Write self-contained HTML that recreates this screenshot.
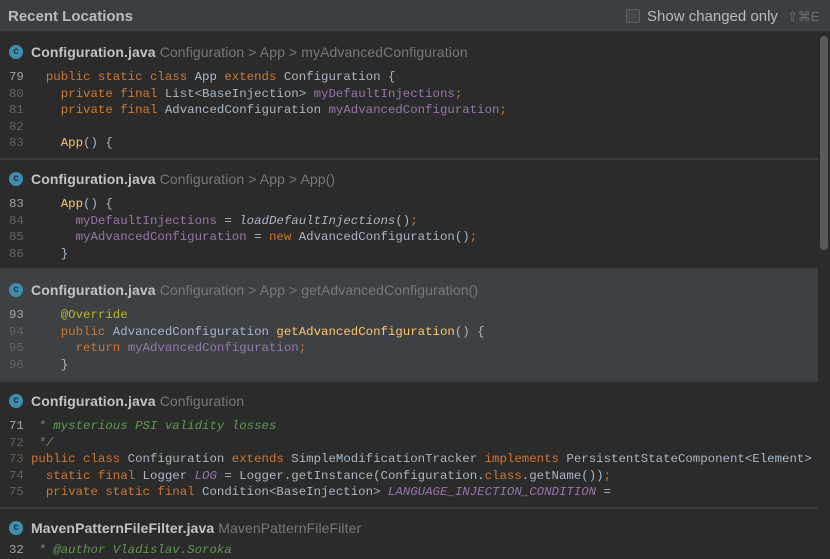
<!DOCTYPE html>
<html><head><meta charset="utf-8"><style>
*{margin:0;padding:0;box-sizing:border-box}
body{width:830px;height:554px;overflow:hidden;background:#2b2b2b;font-family:"Liberation Sans",sans-serif;position:relative}
.top{position:absolute;left:0;top:0;width:830px;height:32px;background:#3c3f41;border-bottom:1px solid #323232}
.title{position:absolute;left:8px;top:8px;font-size:15px;font-weight:bold;color:#bbbbbb}
.cb{position:absolute;left:626px;top:9px;width:14px;height:14px;border:1px solid #5e6060;border-radius:2px;background:#43494a}
.show{position:absolute;left:647px;top:8px;font-size:15px;color:#bbbbbb}
.sc{position:absolute;left:787px;top:9px;font-size:13px;color:#6e6e6e}
.sep{position:absolute;left:0;width:818px;height:2px;background:#3a3d3f}
.sel{position:absolute;left:0;top:270px;width:818px;height:110px;background:#3e4144}
.hd{position:absolute;left:9px;font-size:14px;color:#787878;white-space:nowrap;line-height:16px;letter-spacing:0.1px}
.hd b{color:#c3c3c3;margin-left:22px;margin-right:4px}
.ic{position:absolute;left:0;top:1px;width:14px;height:14px;border-radius:50%;background:#3f8eaf;color:#1f3640;font-size:10px;font-weight:bold;text-align:center;line-height:14px;letter-spacing:0}
.code{position:absolute;left:0;width:818px;overflow:hidden;font-family:"Liberation Mono",monospace;font-size:12.4px;line-height:16.6px;white-space:pre;color:#a9b7c6}
.ln{display:inline-block;width:31px;padding-left:9px;color:#606366}
.cl{color:#a4a3a3}
.k{color:#cc7832}.f{color:#9876aa}.m{color:#ffc66d}.c{color:#629755;font-style:italic}.a{color:#bbb529}.i{font-style:italic}
.sb{position:absolute;left:820px;top:36px;width:8px;height:214px;border-radius:4px;background:#595b5d}
</style></head><body>
<div class="top"><div class="title">Recent Locations</div><div class="cb"></div><div class="show">Show changed only</div><div class="sc">⇧⌘E</div></div>
<div class="sel"></div>
<div class="sep" style="top:158px"></div>
<div class="sep" style="top:268px"></div>
<div class="sep" style="top:380px"></div>
<div class="sep" style="top:507px"></div>

<div class="hd" style="top:44px"><span class="ic">c</span><b>Configuration.java</b>Configuration &gt; App &gt; myAdvancedConfiguration</div>
<div class="code" style="top:69px"><span class="ln cl">79</span>  <span class="k">public static class</span> App <span class="k">extends</span> Configuration {
<span class="ln">80</span>    <span class="k">private final</span> List&lt;BaseInjection&gt; <span class="f">myDefaultInjections</span><span class="k">;</span>
<span class="ln">81</span>    <span class="k">private final</span> AdvancedConfiguration <span class="f">myAdvancedConfiguration</span><span class="k">;</span>
<span class="ln">82</span>
<span class="ln">83</span>    <span class="m">App</span>() {</div>

<div class="hd" style="top:171px"><span class="ic">c</span><b>Configuration.java</b>Configuration &gt; App &gt; App()</div>
<div class="code" style="top:196px"><span class="ln cl">83</span>    <span class="m">App</span>() {
<span class="ln">84</span>      <span class="f">myDefaultInjections</span> = <span class="i">loadDefaultInjections</span>()<span class="k">;</span>
<span class="ln">85</span>      <span class="f">myAdvancedConfiguration</span> = <span class="k">new</span> AdvancedConfiguration()<span class="k">;</span>
<span class="ln">86</span>    }</div>

<div class="hd" style="top:282px"><span class="ic">c</span><b>Configuration.java</b>Configuration &gt; App &gt; getAdvancedConfiguration()</div>
<div class="code" style="top:307px"><span class="ln cl">93</span>    <span class="a">@Override</span>
<span class="ln">94</span>    <span class="k">public</span> AdvancedConfiguration <span class="m">getAdvancedConfiguration</span>() {
<span class="ln">95</span>      <span class="k">return</span> <span class="f">myAdvancedConfiguration</span><span class="k">;</span>
<span class="ln">96</span>    }</div>

<div class="hd" style="top:393px"><span class="ic">c</span><b>Configuration.java</b>Configuration</div>
<div class="code" style="top:418px"><span class="ln cl">71</span> <span class="c">* mysterious PSI validity losses</span>
<span class="ln">72</span> <span class="c">*/</span>
<span class="ln">73</span><span class="k">public class</span> Configuration <span class="k">extends</span> SimpleModificationTracker <span class="k">implements</span> PersistentStateComponent&lt;Element&gt;
<span class="ln">74</span>  <span class="k">static final</span> Logger <span class="f i">LOG</span> = Logger.getInstance(Configuration.<span class="k">class</span>.getName())<span class="k">;</span>
<span class="ln">75</span>  <span class="k">private static final</span> Condition&lt;BaseInjection&gt; <span class="f i">LANGUAGE_INJECTION_CONDITION</span> =</div>

<div class="hd" style="top:520px"><span class="ic">c</span><b>MavenPatternFileFilter.java</b>MavenPatternFileFilter</div>
<div class="code" style="top:542px"><span class="ln cl">32</span> <span class="c">* @author Vladislav.Soroka</span></div>

<div class="sb"></div>
</body></html>
